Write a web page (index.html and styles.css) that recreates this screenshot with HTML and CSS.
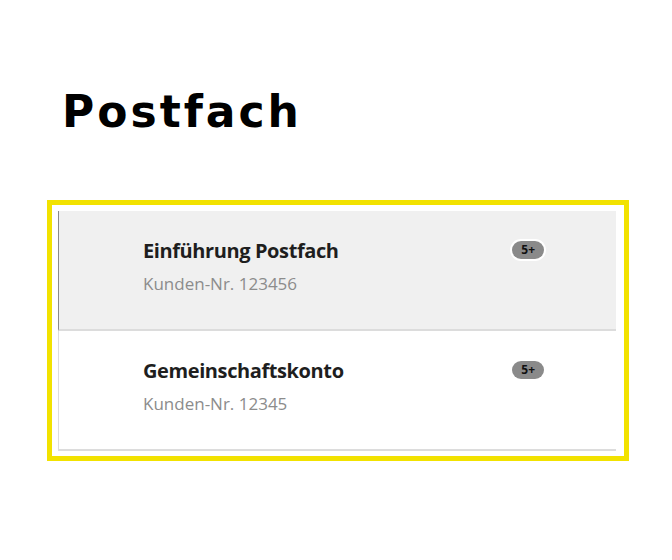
FILE: index.html
```html
<!DOCTYPE html>
<html lang="de">
<head>
  <meta charset="UTF-8">
  <title>Postfach</title>
  <link rel="stylesheet" href="styles.css">
</head>
<body>
  <div class="page">
    <h1 class="page-title">Postfach</h1>

    <div class="mailbox-frame">
      <ul class="account-list">
        <li class="account active">
          <div class="account-info">
            <div class="account-name">Einführung Postfach</div>
            <div class="account-no">Kunden-Nr. 123456</div>
          </div>
          <span class="badge">5+</span>
        </li>
        <li class="account">
          <div class="account-info">
            <div class="account-name">Gemeinschaftskonto</div>
            <div class="account-no">Kunden-Nr. 12345</div>
          </div>
          <span class="badge">5+</span>
        </li>
      </ul>
    </div>
  </div>
</body>
</html>
```

FILE: styles.css
```css
:root {
  --yellow: #f2e200;
  --text-dark: #1e1e1e;
  --text-muted: #8c8c8c;
  --line: #dcdcdc;
}

body {
  margin: 0;
  background: #fff;
  font-family: 'Open Sans', Arial, sans-serif;
}

.page {
  padding: 0 43px 0 47px;
}

.page-title {
  margin: 0;
  padding: 87px 0 0 15px;
  font-family: 'DejaVu Sans', 'Liberation Sans', sans-serif;
  font-weight: 700;
  font-size: 44px;
  line-height: 50px;
  letter-spacing: 3px;
  color: #000;
}

.mailbox-frame {
  margin-top: 63px;
  border: 5px solid var(--yellow);
  padding: 6px 8px 5px 6px;
}

.account-list {
  list-style: none;
  margin: 0;
  padding: 0;
}

.account {
  display: flex;
  justify-content: space-between;
  align-items: flex-start;
  height: 118px;
  padding: 0 72px 0 84px;
  border-left: 1px solid var(--line);
  border-bottom: 2px solid var(--line);
  background: #fff;
}

.account.active {
  background: #f0f0f0;
  border-left-color: #8a8a8a;
}

.account-info {
  padding-top: 26px;
}

.account-name {
  font-weight: 700;
  font-size: 20px;
  line-height: 28px;
  letter-spacing: -0.4px;
  color: var(--text-dark);
}

.account-no {
  margin-top: 8px;
  font-size: 17px;
  line-height: 22px;
  color: var(--text-muted);
}

.badge {
  margin-top: 30px;
  padding: 0 9px;
  height: 18px;
  line-height: 18px;
  border-radius: 9px;
  background: #8a8a8a;
  color: #111;
  font-size: 12px;
  font-weight: 700;
  box-shadow: 0 0 0 2px #fff;
}
```
